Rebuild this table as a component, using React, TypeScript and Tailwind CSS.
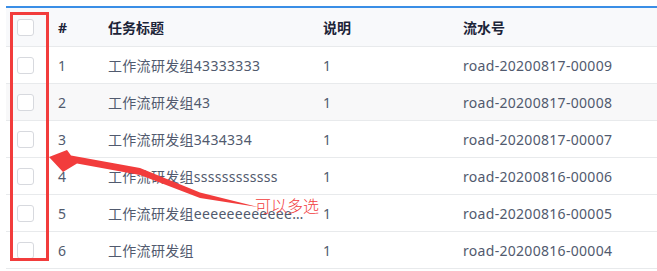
import React from "react";

const rows = [
  { n: 1, title: "工作流研发组43333333", desc: "1", code: "road-20200817-00009", hover: false },
  { n: 2, title: "工作流研发组43", desc: "1", code: "road-20200817-00008", hover: true },
  { n: 3, title: "工作流研发组3434334", desc: "1", code: "road-20200817-00007", hover: false },
  { n: 4, title: "工作流研发组ssssssssssss", desc: "1", code: "road-20200816-00006", hover: false },
  { n: 5, title: "工作流研发组eeeeeeeeeeeeeeeeeeeeeee", desc: "1", code: "road-20200816-00005", hover: false },
  { n: 6, title: "工作流研发组", desc: "1", code: "road-20200816-00004", hover: false },
];

function Box() {
  return <div className="w-[17px] h-[17px] border border-[#d7d9de] rounded-[3px] bg-white" />;
}

export default function App() {
  return (
    <div
      className="relative w-[657px] h-[271px] bg-white overflow-hidden"
      style={{ fontFamily: '"Noto Sans", "Noto Sans CJK SC", sans-serif' }}
    >
      <div className="pl-[6px] pt-[6px]">
        <div className="border-t-2 border-[#3a8ee6]">
          <div className="flex h-[39px] bg-[#f8f9fb] border-b border-[#e8eaec] items-center text-[14px] font-bold text-[#1c2438]">
            <div className="w-[34px] pl-[11px] flex items-center"><Box /></div>
            <div className="w-[50px] pl-[18px]">#</div>
            <div className="w-[215px] pl-[18px]">任务标题</div>
            <div className="w-[140px] pl-[18px]">说明</div>
            <div className="flex-1 pl-[18px]">流水号</div>
          </div>
          {rows.map((r) => (
            <div
              key={r.n}
              className={`flex h-[37px] border-b border-[#e8eaec] items-center text-[14px] tracking-[0.3px] text-[#515a6e] ${r.hover ? "bg-[#f8f8f9]" : "bg-white"}`}
            >
              <div className="w-[34px] pl-[11px] flex items-center"><Box /></div>
              <div className="w-[50px] pl-[18px]">{r.n}</div>
              <div className="w-[215px] pl-[18px] truncate">{r.title}</div>
              <div className="w-[140px] pl-[18px]">{r.desc}</div>
              <div className="flex-1 pl-[18px]">{r.code}</div>
            </div>
          ))}
        </div>
      </div>

      <div className="absolute left-[10px] top-[12px] w-[39px] h-[249px] border-[3px] border-[#f23c3c]" />

      <svg className="absolute left-0 top-0" width="657" height="271" viewBox="0 0 657 271">
        <polygon
          points="49,157 67,150 71,155.5 140,168 200,192.5 258,207 200,198 140,175 77,163.5 63,172"
          fill="#f23c3c"
        />
      </svg>

      <div
        className="absolute left-[255px] top-[194px] text-[16px] leading-[22px] text-[#f23c3c]"
        style={{ fontFamily: '"Noto Sans CJK SC", sans-serif', fontWeight: 300 }}
      >
        可以多选
      </div>
    </div>
  );
}
